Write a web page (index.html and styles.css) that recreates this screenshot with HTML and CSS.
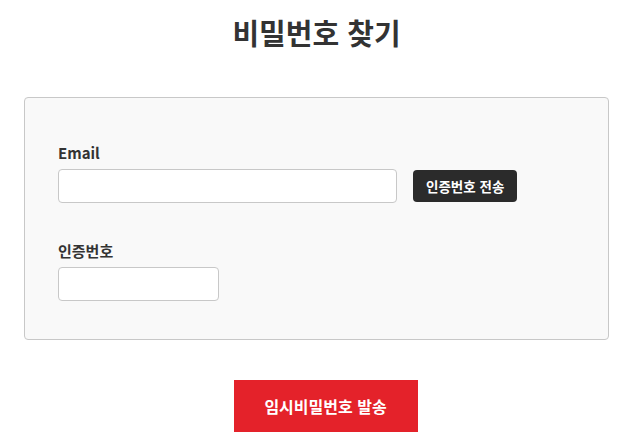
FILE: index.html
```html
<!DOCTYPE html>
<html lang="ko">
<head>
    <meta charset="UTF-8">
    <meta name="viewport" content="width=device-width, initial-scale=1.0">
    <title>비밀번호 찾기</title>
    <link rel="stylesheet" href="styles.css">
</head>
<body>
    <div class="wrap">
        <h1 class="title">비밀번호 찾기</h1>
        <div class="find-box">
            <label class="field-label" for="email">Email</label>
            <div class="row">
                <input type="text" id="email" class="input-email">
                <button class="btn-send">인증번호 전송</button>
            </div>
            <label class="field-label second" for="code">인증번호</label>
            <input type="text" id="code" class="input-code">
        </div>
        <div class="submit-area">
            <button class="btn-submit">임시비밀번호 발송</button>
        </div>
    </div>
</body>
</html>
```

FILE: styles.css
```css
body {
    margin: 0;
    font-family: "Noto Sans CJK KR", "Noto Sans", sans-serif;
    color: #333;
    background: #fff;
}
.wrap {
    padding: 0 16px 0 24px;
}
.title {
    margin: 0;
    padding-top: 12px;
    height: 50px;
    font-size: 29px;
    font-weight: 700;
    line-height: 40px;
    text-align: center;
    color: #333;
}
.find-box {
    margin-top: 35px;
    border: 1px solid #c8c8c8;
    border-radius: 4px;
    background: #f9f9f9;
    padding: 45px 33px 38px;
}
.field-label {
    display: block;
    font-size: 15px;
    font-weight: 700;
    line-height: 20px;
    margin-bottom: 6px;
    color: #333;
}
.field-label.second {
    margin-top: 38px;
}
.row {
    display: flex;
    align-items: center;
    gap: 16px;
}
input {
    box-sizing: border-box;
    height: 34px;
    border: 1px solid #c8c8c8;
    border-radius: 4px;
    background: #fff;
    padding: 0 10px;
    font-size: 14px;
}
.input-email {
    width: 339px;
}
.input-code {
    width: 161px;
    display: block;
}
.btn-send {
    height: 32px;
    padding: 0 13px;
    border: none;
    border-radius: 4px;
    background: #2b2b2b;
    color: #fff;
    font-family: inherit;
    font-size: 13.5px;
    font-weight: 700;
    cursor: pointer;
}
.submit-area {
    display: flex;
    justify-content: center;
    margin-top: 40px;
    padding-left: 18px;
}
.btn-submit {
    width: 184px;
    height: 52px;
    border: none;
    background: #e4222a;
    color: #fff;
    font-family: inherit;
    font-size: 16px;
    font-weight: 700;
    cursor: pointer;
}
```
